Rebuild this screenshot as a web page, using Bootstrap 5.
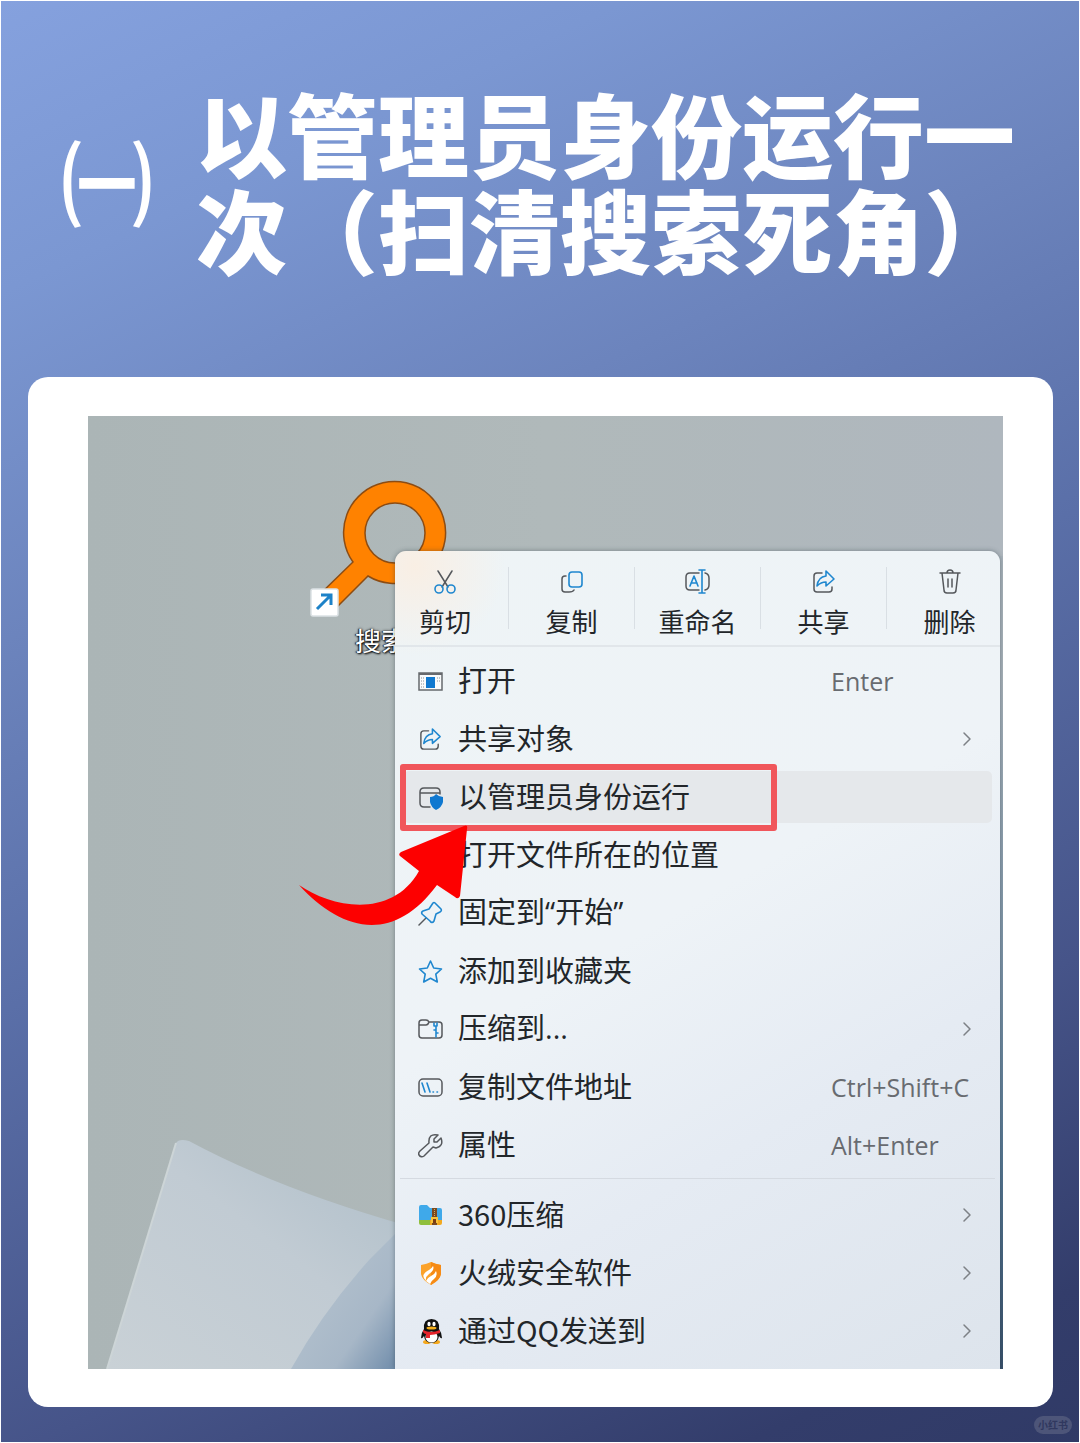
<!DOCTYPE html>
<html lang="zh-CN">
<head>
<meta charset="utf-8">
<meta name="viewport" content="width=device-width, initial-scale=1">
<title>以管理员身份运行一次</title>
<link href="https://cdn.jsdelivr.net/npm/bootstrap@5.3.0/dist/css/bootstrap.min.css" rel="stylesheet">
<style>
  body { font-family: "Noto Sans CJK SC", sans-serif; background: #fff; padding: 1px; }
  .poster { background: linear-gradient(155deg, #85a1de 0%, #7b97d2 15%, #6c84bd 33%, #5a6fa8 52%, #465489 75%, #333d6b 92%, #303a66 100%); padding: 82px 26px 35px 27px; }
  .poster-head { padding: 0 24px 0 33px; gap: 43px; margin-bottom: 102px; }
  .poster-num { font-size: 92px; line-height: 96px; }
  .poster-title { font-size: 91px; line-height: 96px; font-weight: 900; }
  .sheet { border-radius: 20px; padding: 39px 50px 38px 60px; }
  .desk { background: #afb8ba; padding: 135px 3px 0 307px; }
  .wallpaper { inset: 0; }
  .shortcut-icon { left: 222px; top: 64px; overflow: visible; }
  .shortcut-name { left: 267px; top: 206px; font-size: 26px; line-height: 36px; text-shadow: 1px 1px 2px #000, -1px 0 1px #222, 0 0 3px #333; }
  .ctx { border-radius: 11px 11px 0 0; box-shadow: 0 0 5px rgba(40,55,65,.45); color: #22262a; padding-bottom: 9px;
    background: radial-gradient(circle at 20px 15px, rgba(250,238,226,.9), rgba(250,238,226,0) 90px), linear-gradient(150deg, #eef4f6 0%, #eef3f7 45%, #e5ebf3 68%, #dde4ec 100%); }
  .ctx button { color: inherit; background: none; border: 0; }
  .ctx-tools { display: grid; grid-template-columns: 113px repeat(3, 126px) 1fr; height: 96px; border-bottom: 2px solid #e1e6ea; }
  .ctx-tools button { font-size: 26px; line-height: 36px; padding: 18px 0 0; gap: 8px; position: relative; white-space: nowrap; }
  .ctx-tools button:first-child { padding-right: 13px; }
  .ctx-tools button:last-child { padding-left: 12px; }
  .ctx-tools button + button { border-left: 1px solid #dde3e7; border-image: linear-gradient(transparent 18%, #d9dfe4 18%, #d9dfe4 82%, transparent 82%) 1; }
  .ctx-list { padding-top: 5px; }
  .ctx-row { height: 52px; margin: 3px 8px 3px 9px; padding: 0 0 0 14px; gap: 15px; border-radius: 5px; font-size: 29px; text-align: left; position: relative; }
  .ctx-name { line-height: 48px; padding-bottom: 4px; }
  .latin { font-family: "Open Sans", sans-serif; }
  .ctx button.picked { background: #e5e8eb; }
  .ctx-row kbd { font: 25px/52px "Open Sans", sans-serif; color: #686b70; background: none; padding: 0; width: 161px; }
  .ctx-row .more { margin-right: 20px; }
  .ctx-line { height: 1px; background: #d5dae1; margin: 4px 5px 7px; }
  .ring { left: -4px; top: -7px; width: 377px; height: 67px; border: 6px solid #f0565b; border-radius: 3px; }
  .pointer { left: 202px; top: 394px; }
  .tagmark { right: 7px; bottom: 8px; font-size: 10px; line-height: 18px; padding: 0 4px; border-radius: 9px; font-weight: 700; background: #4d5579; color: #30385f; }
  svg { display: block; flex: none; }
  .ln { fill: none; stroke: #55585c; stroke-width: 1.5; stroke-linecap: round; stroke-linejoin: round; }
  .more .ln { stroke: #7d8186; }
  .bl { fill: none; stroke: #1f87cf; stroke-width: 1.6; stroke-linecap: round; stroke-linejoin: round; }
</style>
<script src="https://cdn.jsdelivr.net/npm/bootstrap@5.3.0/dist/js/bootstrap.bundle.min.js"></script>
</head>
<body>
<main class="poster position-relative">
  <header class="poster-head d-flex align-items-center text-white">
    <span class="poster-num fw-bold">㈠</span>
    <h1 class="poster-title m-0">以管理员身份运行一次（扫清搜索死角）</h1>
  </header>

  <section class="sheet bg-white">
    <div class="desk position-relative overflow-hidden">
      <svg class="wallpaper position-absolute w-100 h-100" viewBox="0 0 915 953" preserveAspectRatio="none" aria-hidden="true">
        <defs>
          <linearGradient id="sky" x1="0" y1="0" x2="1" y2="0"><stop offset="0" stop-color="#abb5b6"/><stop offset=".5" stop-color="#b0b9ba"/><stop offset="1" stop-color="#afb7be"/></linearGradient>
          <linearGradient id="petal" x1="0" y1="1" x2="1" y2="0"><stop offset="0" stop-color="#c9d1d6"/><stop offset=".55" stop-color="#c1cbd3"/><stop offset="1" stop-color="#adbdc8"/></linearGradient>
          <linearGradient id="fold" x1=".2" y1=".3" x2="1" y2="1"><stop offset="0" stop-color="#b4c2ce"/><stop offset=".55" stop-color="#a7b7c7"/><stop offset="1" stop-color="#6584a5"/></linearGradient>
          <linearGradient id="rim" x1="0" y1="0" x2="0" y2="1"><stop offset=".15" stop-color="#a9b3bb"/><stop offset=".5" stop-color="#7d94a8"/><stop offset=".75" stop-color="#557692"/><stop offset="1" stop-color="#38506b"/></linearGradient>
        </defs>
        <rect width="915" height="953" fill="url(#sky)"/>
        <path d="M19 953 L88 727 Q91 722 101 725 Q190 773 320 810 V953Z" fill="url(#petal)"/>
        <path d="M19 953 L88 727" stroke="#cdd5d7" stroke-width="2" fill="none"/>
        <path d="M203 953 Q235 895 282 843 L320 805 V953Z" fill="url(#fold)"/>
        <rect x="911" y="140" width="4" height="813" fill="url(#rim)"/>
      </svg>

      <svg class="shortcut-icon position-absolute" width="140" height="140" viewBox="0 0 140 140" aria-hidden="true">
        <path fill-rule="evenodd" d="M43 82 A51 51 0 1 1 58 96 L20 134 L4 120Z M85 23 A30 30 0 1 0 85 83 A30 30 0 1 0 85 23Z" fill="#ff8200" stroke="#8c4c13" stroke-width="1.500"/>
        <rect x="1" y="109" width="27" height="27" rx="2" fill="#fff" stroke="#dce2e5" stroke-width="1.500"/>
        <path d="M7 129 L20 116 M11 115 H21 V125" fill="none" stroke="#1d82c8" stroke-width="3"/>
      </svg>
      <span class="shortcut-name position-absolute text-white text-nowrap">搜索</span>

      <div class="ctx position-relative">
        <div class="ctx-tools">
          <button type="button" class="d-flex flex-column align-items-center">
            <svg width="26" height="26" viewBox="0 0 26 26" aria-hidden="true"><path class="ln" d="M6 2 L16 18 M20 2 L10 18"/><circle class="bl" cx="7" cy="20" r="4"/><circle class="bl" cx="19" cy="20" r="4"/></svg>剪切</button>
          <button type="button" class="d-flex flex-column align-items-center">
            <svg width="26" height="26" viewBox="0 0 26 26" aria-hidden="true"><path class="ln" d="M7 7 H6 Q3 7 3 10 V20 Q3 23 6 23 H10 Q14 23 15 21"/><rect class="bl" x="10" y="3" width="13" height="15" rx="3"/></svg>复制</button>
          <button type="button" class="d-flex flex-column align-items-center">
            <svg width="26" height="26" viewBox="0 0 26 26" aria-hidden="true"><path class="ln" d="M14 4 H5 Q1 4 1 8 V17 Q1 21 5 21 H14 M20 4 Q24 5 24 9 V16 Q24 20 20 21"/><path class="bl" d="M5 17 L9 7 L13 17 M6 14 H12 M17 1 V24 M14 1 H20 M14 24 H20"/></svg>重命名</button>
          <button type="button" class="d-flex flex-column align-items-center">
            <svg width="26" height="26" viewBox="0 0 26 26" aria-hidden="true"><path class="ln" d="M11 4 H6 Q3 4 3 7 V20 Q3 23 6 23 H18 Q21 23 21 20 V18"/><path class="bl" d="M15 2 L23 10 L15 17 V13 Q10 13 6 17 Q7 8 15 7Z"/></svg>共享</button>
          <button type="button" class="d-flex flex-column align-items-center">
            <svg width="26" height="26" viewBox="0 0 26 26" aria-hidden="true"><path class="ln" d="M3 4 H23 M5 4 L7 21 Q7 24 10 24 H16 Q19 24 19 21 L21 4 M10 4 Q10 1 13 1 Q16 1 16 4 M11 10 V18 M15 10 V18"/></svg>删除</button>
        </div>

        <div class="ctx-list d-flex flex-column">
          <button type="button" class="ctx-row d-flex align-items-center">
            <svg width="25" height="25" viewBox="0 0 25 25" aria-hidden="true"><rect x="1" y="4" width="23" height="17" fill="#f8fafb" stroke="#66696d" stroke-width="1.500"/><path d="M1 5 H24" stroke="#66696d" stroke-width="2"/><rect x="8" y="8" width="9" height="11" fill="#0f78cf"/><path d="M3 9 H6 M3 12 H6 M3 15 H6 M3 18 H6 M19 9 H22 M19 12 H22" stroke="#8c9094" stroke-dasharray="1 1"/></svg>
            <span class="ctx-name flex-grow-1">打开</span><kbd>Enter</kbd></button>
          <button type="button" class="ctx-row d-flex align-items-center">
            <svg width="25" height="25" viewBox="0 0 26 26" aria-hidden="true"><path class="ln" d="M11 4 H6 Q3 4 3 7 V20 Q3 23 6 23 H18 Q21 23 21 20 V18"/><path class="bl" d="M15 2 L23 10 L15 17 V13 Q10 13 6 17 Q7 8 15 7Z"/></svg>
            <span class="ctx-name flex-grow-1">共享对象</span>
            <svg class="more" width="10" height="16" viewBox="0 0 10 16" aria-hidden="true"><path class="ln" d="M2 2 L8 8 L2 14"/></svg></button>
          <button type="button" class="ctx-row picked d-flex align-items-center">
            <svg width="25" height="25" viewBox="0 0 25 25" aria-hidden="true"><path class="ln" d="M12 22 H6 Q2 22 2 18 V7 Q2 3 6 3 H18 Q22 3 22 7 V9 M2 8 H22"/><path d="M18 9 Q21 12 25 12 V17 Q24 22 18 25 Q13 22 12 17 V12 Q16 12 18 9Z" fill="#0f78d0"/></svg>
            <span class="ctx-name flex-grow-1">以管理员身份运行</span>
            <span class="ring position-absolute"></span></button>
          <button type="button" class="ctx-row d-flex align-items-center">
            <svg width="25" height="25" viewBox="0 0 25 25" aria-hidden="true"><path class="ln" d="M2 6 Q2 4 4 4 H9 L12 7 H21 Q23 7 23 9 V15 Q23 17 21 17 H4 Q2 17 2 15Z"/></svg>
            <span class="ctx-name flex-grow-1">打开文件所在的位置</span></button>
          <button type="button" class="ctx-row d-flex align-items-center">
            <svg width="25" height="25" viewBox="0 0 25 25" aria-hidden="true"><path class="ln" d="M1 24 L8 17"/><path class="bl" d="M15 2 Q16 1 17 2 L23 8 Q24 10 22 11 L18 13 L16 20 Q14 23 12 20 L4 13 Q3 11 5 10 L11 8Z"/></svg>
            <span class="ctx-name flex-grow-1">固定到<span class="latin">“</span>开始<span class="latin">”</span></span></button>
          <button type="button" class="ctx-row d-flex align-items-center">
            <svg width="25" height="25" viewBox="0 0 25 25" aria-hidden="true"><path class="bl" d="M12.500 2 L15.700 9 L23.500 10 L17.800 15.200 L19.300 23 L12.500 19.200 L5.700 23 L7.200 15.200 L1.500 10 L9.300 9Z"/></svg>
            <span class="ctx-name flex-grow-1">添加到收藏夹</span></button>
          <button type="button" class="ctx-row d-flex align-items-center">
            <svg width="25" height="25" viewBox="0 0 25 25" aria-hidden="true"><path class="ln" d="M1 6 Q1 3 4 3 H8 Q10 3 11 5 H21 Q24 5 24 8 V18 Q24 21 21 21 H4 Q1 21 1 18Z M1 8 H8 Q10 8 11 5"/><path class="bl" d="M16 6 V9 H19 V6 M18 10 V13 H16 M18 13 V16 H20 M18 16 V20"/></svg>
            <span class="ctx-name flex-grow-1">压缩到<span class="latin">...</span></span>
            <svg class="more" width="10" height="16" viewBox="0 0 10 16" aria-hidden="true"><path class="ln" d="M2 2 L8 8 L2 14"/></svg></button>
          <button type="button" class="ctx-row d-flex align-items-center">
            <svg width="25" height="25" viewBox="0 0 25 25" aria-hidden="true"><rect class="ln" x="1" y="4" width="23" height="17" rx="4"/><path class="bl" d="M4 8 L7 17 M9 8 L12 17 M15 17 H15.500 M19 17 H19.500"/></svg>
            <span class="ctx-name flex-grow-1">复制文件地址</span><kbd>Ctrl+Shift+C</kbd></button>
          <button type="button" class="ctx-row d-flex align-items-center">
            <svg width="25" height="25" viewBox="0 0 25 25" aria-hidden="true"><path class="ln" d="M20 2 L16 6 V9 H19 L23 5 Q26 13 18 15 L15 14 L6 23 Q3 25 1 22 Q0 20 2 18 L11 10 Q10 0 20 2Z"/></svg>
            <span class="ctx-name flex-grow-1">属性</span><kbd>Alt+Enter</kbd></button>
          <div class="ctx-line"></div>
          <button type="button" class="ctx-row d-flex align-items-center">
            <svg width="25" height="25" viewBox="0 0 25 25" aria-hidden="true"><path d="M1 4 Q1 2 3 2 H9 L12 5 H22 Q24 5 24 7 V18 H1Z" fill="#3fa9ea"/><path d="M1 17 H13 V22 H3 Q1 22 1 20Z" fill="#8fbf3c"/><path d="M12 17 H24 V20 Q24 22 22 22 H12Z" fill="#f2a91f"/><rect x="14" y="5" width="5" height="17" fill="#7a4a21"/><path d="M16.500 6 V14" stroke="#d8a85a" stroke-dasharray="1 1"/><rect x="13" y="14" width="7" height="6" fill="#f8c33b"/><rect x="15" y="16" width="3" height="4" fill="#7a3c12"/></svg>
            <span class="ctx-name flex-grow-1">360压缩</span>
            <svg class="more" width="10" height="16" viewBox="0 0 10 16" aria-hidden="true"><path class="ln" d="M2 2 L8 8 L2 14"/></svg></button>
          <button type="button" class="ctx-row d-flex align-items-center">
            <svg width="25" height="25" viewBox="0 0 25 25" aria-hidden="true"><path d="M13 1 Q17 3 23 4 V13 Q22 19 13 24 Q4 19 3 13 V4 Q9 3 13 1Z" fill="#fba22a"/><path d="M13 1 Q17 3 23 4 V13 Q22 19 13 24Z" fill="#f68b16"/><path d="M15 5 Q17 9 11 13 Q7 16 8 20 Q4 16 6 13 Q7 11 11 9 Q14 7 15 5Z M18 10 Q20 15 16 18 Q13 20 12 23 L8 20 Q9 17 13 15 Q17 13 18 10Z" fill="#fff"/></svg>
            <span class="ctx-name flex-grow-1">火绒安全软件</span>
            <svg class="more" width="10" height="16" viewBox="0 0 10 16" aria-hidden="true"><path class="ln" d="M2 2 L8 8 L2 14"/></svg></button>
          <button type="button" class="ctx-row d-flex align-items-center">
            <svg width="25" height="25" viewBox="0 0 25 25" aria-hidden="true"><ellipse cx="9" cy="23" rx="4" ry="2" fill="#f5a81c"/><ellipse cx="18" cy="23" rx="4" ry="2" fill="#f5a81c"/><path d="M6 10 Q5 0 13.500 0 Q22 0 21 10 Q24 14 24 19 Q23 20 21 17 Q20 24 13.500 24 Q7 24 6 17 Q4 20 3 19 Q3 14 6 10Z" fill="#111"/><ellipse cx="13.500" cy="18" rx="6" ry="5.500" fill="#fff"/><ellipse cx="11" cy="5" rx="1.600" ry="2.200" fill="#fff"/><ellipse cx="16" cy="5" rx="1.600" ry="2.200" fill="#fff"/><ellipse cx="13.500" cy="9" rx="5" ry="1.500" fill="#f5b01c"/><path d="M5 11 Q13 15 22 11 V14 Q16 16 12 16 V19 H8 V15 Q6 15 5 13Z" fill="#e5232c"/></svg>
            <span class="ctx-name flex-grow-1">通过QQ发送到</span>
            <svg class="more" width="10" height="16" viewBox="0 0 10 16" aria-hidden="true"><path class="ln" d="M2 2 L8 8 L2 14"/></svg></button>
        </div>
      </div>

      <svg class="pointer position-absolute" width="190" height="130" viewBox="0 0 190 130" aria-hidden="true">
        <path d="M9 75 C42 98 102 109 129 61 L110 46 Q108 44 111 42 L174 16 Q178 14 177 19 L170 86 Q168 90 165 87 L147 75 C102 136 50 120 9 75Z" fill="#fd0000"/>
      </svg>
    </div>
  </section>
  <span class="tagmark position-absolute">小红书</span>
</main>
</body>
</html>
